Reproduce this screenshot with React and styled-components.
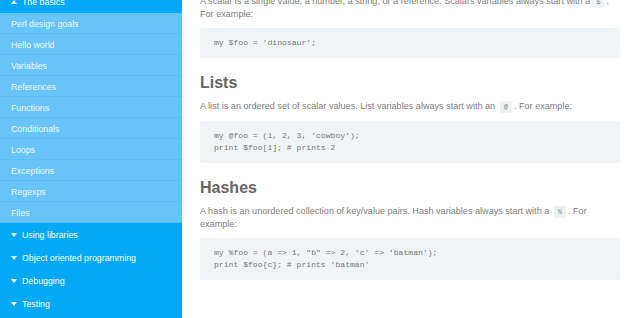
import React from "react";
import styled, { createGlobalStyle } from "styled-components";

const Global = createGlobalStyle`
  html, body { margin: 0; padding: 0; background: #fff; }
  body { font-family: "Liberation Sans", Arial, sans-serif; overflow: hidden; }
`;

const Page = styled.div`
  display: flex;
  height: 318px;
  width: 640px;
  overflow: hidden;
`;

const Sidebar = styled.nav`
  width: 182px;
  flex: none;
  background: #03a9f4;
  display: flex;
  flex-direction: column;
  margin-top: -10px;
`;

const Section = styled.div`
  display: flex;
  align-items: center;
  gap: 5px;
  height: 23px;
  padding-left: 11px;
  color: #fff;
  font-size: 8.8px;
`;

const SubList = styled.div`
  display: flex;
  flex-direction: column;
  background: #67c4f6;
`;

const SubItem = styled.div`
  height: 20px;
  line-height: 22px;
  padding-left: 11px;
  color: #eef8fe;
  font-size: 8.8px;
  border-bottom: 1px solid #5cbbef;
`;

const Main = styled.main`
  flex: 1;
  min-width: 0;
  padding: 0 20px 0 18px;
  color: #808080;
  font-size: 9.1px;
`;

const Para = styled.p`
  margin: ${(p) => (p.$first ? "-5px" : "0")} 0 0;
  line-height: 12px;
`;

const Inline = styled.code`
  font-family: "Liberation Mono", monospace;
  font-size: 7px;
  background: #eef2f4;
  color: #8a8a8a;
  border-radius: 2px;
  padding: 2px 4px;
  margin: 0 2px;
`;

const CodeBlock = styled.pre`
  margin: 8px 0 0;
  background: #f0f4f6;
  border-radius: 3px;
  padding: 9px 14px;
  font-family: "Liberation Mono", monospace;
  font-size: 8.1px;
  line-height: 12px;
  color: #777;
`;

const Heading = styled.h2`
  margin: 15px 0 7px;
  font-size: 16px;
  line-height: 20px;
  font-weight: bold;
  color: #666;
`;

const Caret = ({ up }) => (
  <svg width="6" height="4" viewBox="0 0 6 4" style={{ flex: "none" }}>
    <path d={up ? "M0 4 L3 0 L6 4 Z" : "M0 0 L6 0 L3 4 Z"} fill="#fff" />
  </svg>
);

const subs = [
  "Perl design goals",
  "Hello world",
  "Variables",
  "References",
  "Functions",
  "Conditionals",
  "Loops",
  "Exceptions",
  "Regexps",
  "Files",
];

const sections = ["Using libraries", "Object oriented programming", "Debugging", "Testing"];

export default function App() {
  return (
    <>
      <Global />
      <Page>
        <Sidebar>
          <Section>
            <Caret up />
            The basics
          </Section>
          <SubList>
            {subs.map((s) => (
              <SubItem key={s}>{s}</SubItem>
            ))}
          </SubList>
          {sections.map((s) => (
            <Section key={s}>
              <Caret />
              {s}
            </Section>
          ))}
        </Sidebar>
        <Main>
          <Para $first>
            A scalar is a single value: a number, a string, or a reference. Scalars variables always start with a
            <Inline>$</Inline>. For example:
          </Para>
          <CodeBlock>my $foo = 'dinosaur';</CodeBlock>
          <Heading>Lists</Heading>
          <Para>
            A list is an ordered set of scalar values. List variables always start with an <Inline>@</Inline>. For
            example:
          </Para>
          <CodeBlock>{`my @foo = (1, 2, 3, 'cowboy');
print $foo[1]; # prints 2`}</CodeBlock>
          <Heading>Hashes</Heading>
          <Para>
            A hash is an unordered collection of key/value pairs. Hash variables always start with a <Inline>%</Inline>. For
            example:
          </Para>
          <CodeBlock>{`my %foo = (a => 1, "b" => 2, 'c' => 'batman');
print $foo{c}; # prints 'batman'`}</CodeBlock>
        </Main>
      </Page>
    </>
  );
}
